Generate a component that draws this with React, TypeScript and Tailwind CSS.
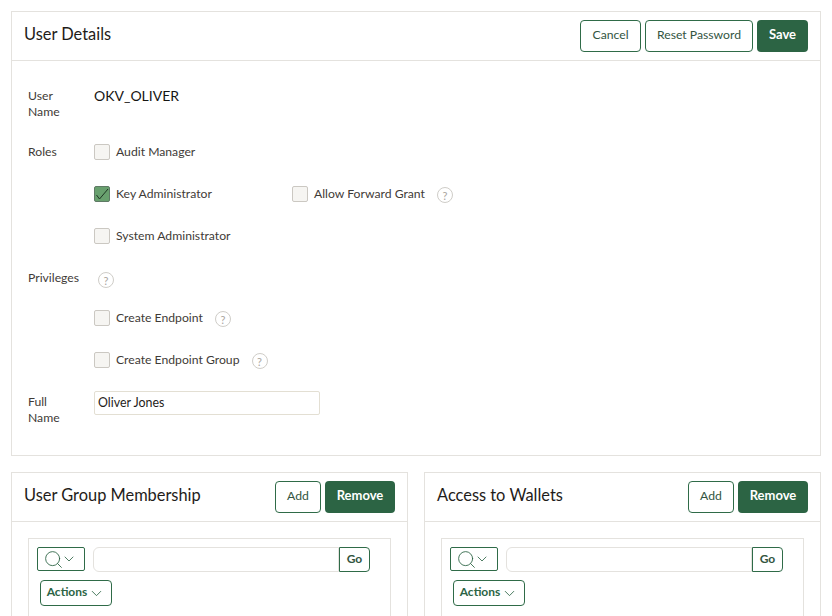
import React from 'react';
import { ChevronDown, Search } from 'lucide-react';

const green = 'border-[#2f6b48]';

const OutlineButton = ({ label, width }: { label: string; width: string }) => (
  <button className={`h-8 ${width} rounded-[4px] border ${green} bg-white pb-0.5 text-[12.2px] text-[#33553f]`}>{label}</button>
);

const SolidButton = ({ label, width }: { label: string; width: string }) => (
  <button className={`h-8 ${width} rounded-[4px] bg-[#2c6444] pb-0.5 text-[13px] font-bold text-white`}>{label}</button>
);

const Help = () => (
  <span className="flex h-4 w-4 items-center justify-center rounded-full border border-[#cfcdc8] text-[11px] leading-none text-[#a9a6a0]">?</span>
);

const Check = ({ label, checked, help }: { label: string; checked?: boolean; help?: boolean }) => (
  <div className="flex h-4 items-center">
    {checked ? (
      <span className="flex h-4 w-4 items-center justify-center rounded-[2px] border border-[#5f7a65] bg-[#68a06e]">
        <svg width="14" height="14" viewBox="0 0 14 14" fill="none" stroke="#1f3524" strokeWidth="1">
          <path d="M1.5 8 L4.5 12 L13 2" />
        </svg>
      </span>
    ) : (
      <span className="h-4 w-4 rounded-[2px] border border-[#cbc8c2] bg-[#f6f5f2]" />
    )}
    <span className="ml-1.5 text-[12.2px] leading-4 text-[#3f3b37]">{label}</span>
    {help && <span className="ml-3 mt-0.5"><Help /></span>}
  </div>
);

const Label = ({ lines }: { lines: string[] }) => (
  <div className="w-[66px] shrink-0 text-[12.2px] leading-4 text-[#3f3b37]">
    {lines.map(l => <div key={l}>{l}</div>)}
  </div>
);

const SubPanel = ({ title, className }: { title: string; className: string }) => (
  <div className={`h-[150px] overflow-hidden border border-[#e4e2de] bg-white ${className}`}>
    <div className="flex h-[49px] items-center justify-between border-b border-[#e4e2de] pl-3 pr-3">
      <h2 className="pb-1 text-[16.4px] text-[#1f1c19]">{title}</h2>
      <div className="flex gap-1">
        <OutlineButton label="Add" width="w-[46px]" />
        <SolidButton label="Remove" width="w-[70px]" />
      </div>
    </div>
    <div className="px-4 pt-4">
      <div className="h-[100px] border border-[#e4e2de] px-2 pt-2">
        <div className="flex items-start">
          <button className={`flex h-6 w-12 items-center justify-center rounded-[2px] border ${green}`}>
            <Search size={21} strokeWidth={1} className="text-[#2c6444]" />
            <ChevronDown size={16} strokeWidth={1.25} className="-ml-[3px] mr-0.5 text-[#2c6444]" />
          </button>
          <div className="ml-2 h-[25px] w-[246px] rounded-l-[6px] border border-[#e4e2de] bg-white" />
          <button className={`h-[25px] w-[31px] rounded-r-[4px] border ${green} bg-white pb-0.5 text-[12px] font-bold text-[#33553f]`}>Go</button>
        </div>
        <button className={`ml-[3px] mt-2 flex h-[26px] w-[72px] items-center justify-center rounded-[4px] border ${green} bg-white pb-0.5 text-[12px] font-bold text-[#2c6444]`}>
          Actions
          <ChevronDown size={17} strokeWidth={1.2} className="ml-[1px] mt-0.5" />
        </button>
      </div>
    </div>
  </div>
);

export default function App() {
  return (
    <div className="h-[616px] w-[832px] overflow-hidden bg-white pl-[11px] pt-[11px] font-['Lato','Open_Sans',sans-serif]">
      <div className="h-[445px] w-[810px] border border-[#e4e2de] bg-white">
        <div className="flex h-[49px] items-center justify-between border-b border-[#e4e2de] pl-3 pr-3">
          <h1 className="pb-1 text-[16.4px] text-[#1f1c19]">User Details</h1>
          <div className="flex gap-1">
            <OutlineButton label="Cancel" width="w-[61px]" />
            <OutlineButton label="Reset Password" width="w-[108px]" />
            <SolidButton label="Save" width="w-[51px]" />
          </div>
        </div>
        <div className="pl-4 pt-[27px]">
          <div className="flex">
            <Label lines={['User', 'Name']} />
            <span className="text-[14px] leading-4 text-[#161513]">OKV_OLIVER</span>
          </div>
          <div className="mt-6 flex">
            <Label lines={['Roles']} />
            <Check label="Audit Manager" />
          </div>
          <div className="ml-[66px] mt-[26px] flex">
            <div className="w-[198px]"><Check label="Key Administrator" checked /></div>
            <Check label="Allow Forward Grant" help />
          </div>
          <div className="ml-[66px] mt-[26px]">
            <Check label="System Administrator" />
          </div>
          <div className="mt-[26px] flex">
            <div className="flex w-[70px]"><Label lines={['Privileges']} /></div>
            <span className="mt-0.5"><Help /></span>
          </div>
          <div className="ml-[66px] mt-[22px]">
            <Check label="Create Endpoint" help />
          </div>
          <div className="ml-[66px] mt-[26px]">
            <Check label="Create Endpoint Group" help />
          </div>
          <div className="mt-[26px] flex">
            <Label lines={['Full', 'Name']} />
            <input
              readOnly
              value="Oliver Jones"
              className="-mt-[3px] h-6 w-[226px] rounded-[2px] border border-[#e3dfd3] bg-white px-[3px] pb-0.5 text-[12.4px] text-[#1f1c19] outline-none"
            />
          </div>
        </div>
      </div>
      <div className="mt-4 flex gap-4">
        <SubPanel title="User Group Membership" className="w-[397px]" />
        <SubPanel title="Access to Wallets" className="w-[397px]" />
      </div>
    </div>
  );
}
